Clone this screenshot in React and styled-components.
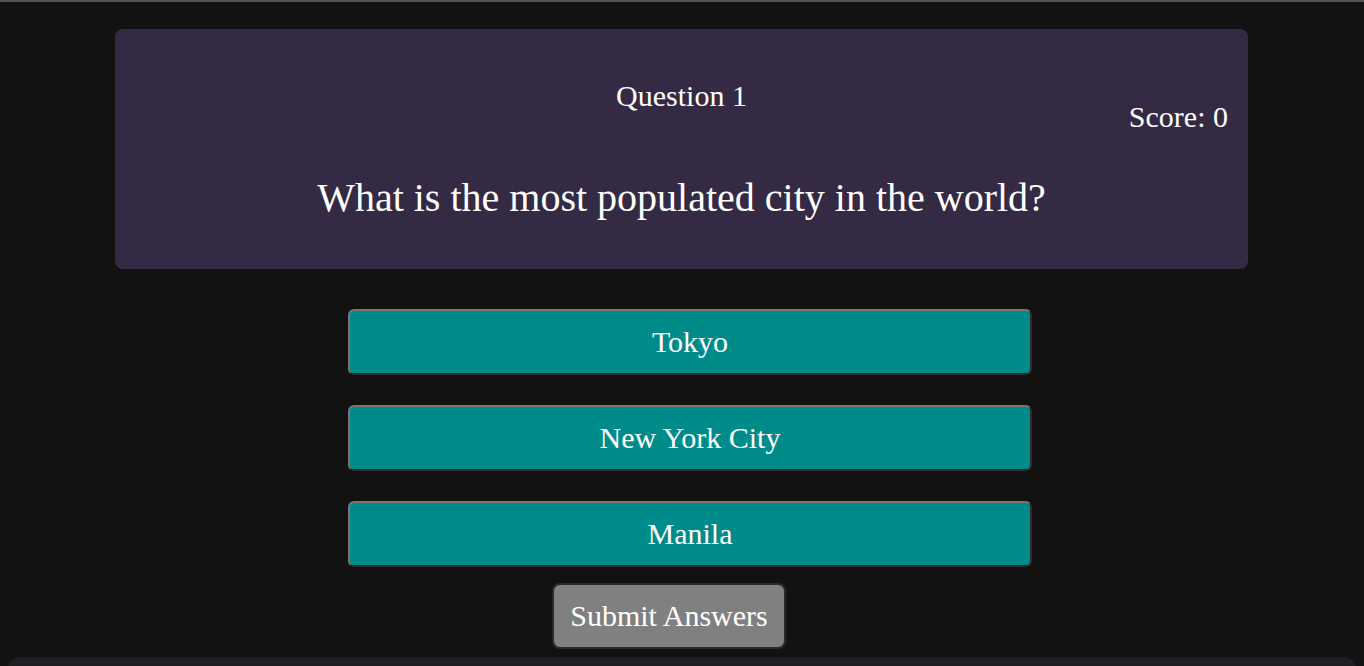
import React from "react";
import styled, { createGlobalStyle } from "styled-components";

const GlobalStyle = createGlobalStyle`
  html, body {
    margin: 0;
    padding: 0;
    background: #121212;
  }
  body {
    font-family: "Liberation Serif", "Times New Roman", serif;
    color: #ffffff;
  }
`;

const answers = ["Tokyo", "New York City", "Manila"];

const App = () => {
  return (
    <>
      <GlobalStyle />
      <Page>
        <Card>
          <QuestionNumber>Question 1</QuestionNumber>
          <QuestionText>What is the most populated city in the world?</QuestionText>
          <Score>Score: 0</Score>
        </Card>

        <Answers>
          {answers.map((a) => (
            <AnswerButton key={a}>{a}</AnswerButton>
          ))}
          <SubmitButton>Submit Answers</SubmitButton>
        </Answers>

        <Footer />
      </Page>
    </>
  );
};

const Page = styled.div`
  border-top: 2px solid #555555;
  min-height: 664px;
  display: flex;
  flex-direction: column;
`;

const Card = styled.div`
  position: relative;
  width: 1133px;
  height: 240px;
  box-sizing: border-box;
  margin: 27px 0 0 115px;
  padding-top: 50px;
  background: #352a43;
  border-radius: 8px;
  display: flex;
  flex-direction: column;
  align-items: center;
`;

const QuestionNumber = styled.h2`
  margin: 0;
  font-size: 30px;
  font-weight: 400;
  line-height: 34px;
`;

const QuestionText = styled.h1`
  margin: 62px 0 0;
  font-size: 40px;
  font-weight: 400;
  line-height: 46px;
`;

const Score = styled.div`
  position: absolute;
  right: 20px;
  top: 71px;
  font-size: 30px;
  line-height: 34px;
`;

const Answers = styled.div`
  margin-top: 40px;
  padding-left: 16px;
  display: flex;
  flex-direction: column;
  align-items: center;
  gap: 30px;
`;

const AnswerButton = styled.button`
  width: 684px;
  height: 66px;
  background: #008b8b;
  color: #ffffff;
  font-family: "Liberation Serif", "Times New Roman", serif;
  font-size: 30px;
  border: 2px solid;
  border-color: #777777 #2e2e2e #2e2e2e #777777;
  border-radius: 6px;
  cursor: pointer;
`;

const SubmitButton = styled.button`
  margin: -14px 42px 0 0;
  width: 234px;
  height: 66px;
  background: #808080;
  color: #ffffff;
  font-family: "Liberation Serif", "Times New Roman", serif;
  font-size: 30px;
  border: 2px solid #2a2a2a;
  border-radius: 8px;
  cursor: pointer;
`;

const Footer = styled.div`
  margin: 8px 8px 0;
  height: 40px;
  background: #1e1f22;
  border-radius: 12px 12px 0 0;
`;

export default App;
